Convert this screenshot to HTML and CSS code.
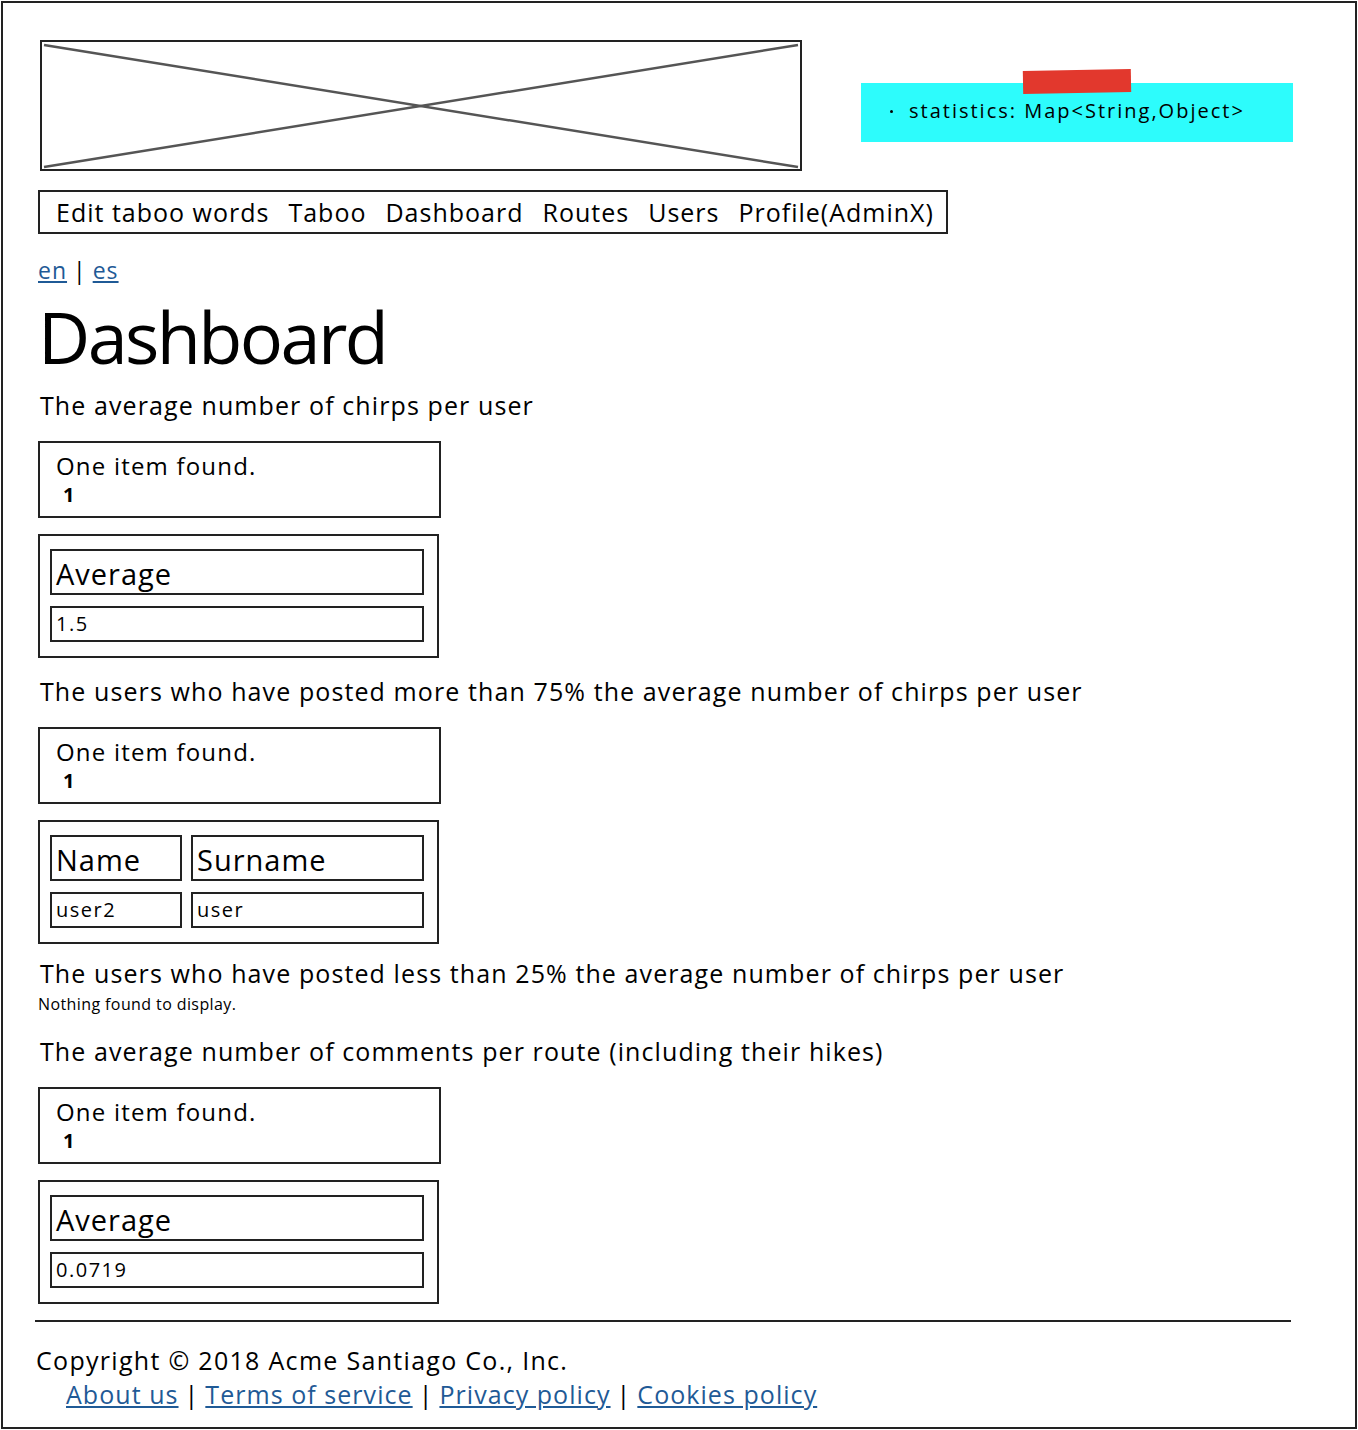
FILE: index.html
```html
<!DOCTYPE html>
<html>
<head>
<meta charset="utf-8">
<link rel="stylesheet" href="styles.css">
</head>
<body>
<div class="frame">
  <div class="header">
    <div class="banner">
      <svg class="banner-x" width="758" height="127" viewBox="0 0 758 127" preserveAspectRatio="none">
        <line x1="2" y1="3" x2="756" y2="125" stroke="#555" stroke-width="2.5"/>
        <line x1="2" y1="125" x2="756" y2="3" stroke="#555" stroke-width="2.5"/>
      </svg>
    </div>
    <div class="note">
      <span class="tape"></span>
      <div class="note-item">statistics: Map&lt;String,Object&gt;</div>
    </div>
  </div>
  <nav class="menu">
    <span>Edit taboo words</span><span>Taboo</span><span>Dashboard</span><span>Routes</span><span>Users</span><span>Profile(AdminX)</span>
  </nav>
  <div class="lang"><a href="#">en</a><span class="sep">|</span><a href="#">es</a></div>
  <h1 class="title">Dashboard</h1>

  <p class="caption c1">The average number of chirps per user</p>
  <div class="found"><div>One item found.</div><div class="count">1</div></div>
  <div class="table">
    <div class="row"><div class="th wide">Average</div></div>
    <div class="row"><div class="td wide">1.5</div></div>
  </div>

  <p class="caption c2">The users who have posted more than 75% the average number of chirps per user</p>
  <div class="found"><div>One item found.</div><div class="count">1</div></div>
  <div class="table">
    <div class="row"><div class="th name">Name</div><div class="th surname">Surname</div></div>
    <div class="row"><div class="td name">user2</div><div class="td surname">user</div></div>
  </div>

  <p class="caption c3">The users who have posted less than 25% the average number of chirps per user</p>
  <p class="nothing">Nothing found to display.</p>

  <p class="caption c4">The average number of comments per route (including their hikes)</p>
  <div class="found"><div>One item found.</div><div class="count">1</div></div>
  <div class="table">
    <div class="row"><div class="th wide">Average</div></div>
    <div class="row"><div class="td wide">0.0719</div></div>
  </div>

  <hr class="rule">
  <div class="copyright">Copyright © 2018 Acme Santiago Co., Inc.</div>
  <div class="links"><a href="#">About us</a><span class="sep">|</span><a href="#">Terms of service</a><span class="sep">|</span><a href="#">Privacy policy</a><span class="sep">|</span><a href="#">Cookies policy</a></div>
</div>
</body>
</html>
```
FILE: styles.css
```css
html, body { margin: 0; padding: 0; background: #fff; }
body { font-family: "Open Sans", "Noto Sans", sans-serif; color: #000; }
.frame {
  margin: 1px 0 0 1px;
  width: 1317px;
  height: 1424px;
  border: 2px solid #222;
  padding: 0 0 0 35px;
  overflow: hidden;
}
.header { display: flex; align-items: flex-start; margin-top: 37px; }
.banner {
  margin-left: 2px;
  width: 758px; height: 127px;
  border: 2px solid #222;
}
.banner-x { display: block; }
.note {
  position: relative;
  margin-left: 59px; margin-top: 43px;
  width: 432px; height: 59px;
  background: #2dfcfc;
}
.tape {
  position: absolute; left: 162px; top: -13px;
  width: 108px; height: 23px;
  background: #e2382d;
  transform: rotate(-1deg);
}
.note-item {
  display: flex; align-items: center; gap: 16px;
  padding-left: 29px;
  font-size: 20px; line-height: 56px; letter-spacing: 2px;
}
.note-item::before {
  content: ""; width: 3px; height: 3px; border-radius: 50%; background: #000;
}
.menu {
  display: flex; gap: 19px;
  margin-top: 19px;
  width: 890px; height: 40px;
  border: 2px solid #222;
  padding-left: 16px;
  align-items: center;
  font-size: 25px; letter-spacing: 1px;
}
.lang { margin-top: 21px; font-size: 23px; line-height: 30px; letter-spacing: 1px; }
.sep { display: inline-block; margin: 0 6px; color: #000; }
a { color: #1f5a96; }
.title { margin: 11px 0 0 0; font-size: 72px; font-weight: 400; line-height: 80px; letter-spacing: -2.6px; }
.caption { margin: 0 0 0 2px; font-size: 25px; line-height: 32px; letter-spacing: 1.1px; }
.c1 { margin-top: 13px; }
.c2 { margin-top: 17px; }
.c3 { margin-top: 13px; }
.c4 { margin-top: 21px; }
.found {
  margin-top: 20px;
  width: 383px; height: 65px;
  border: 2px solid #222;
  padding: 8px 0 0 16px;
  font-size: 24px; line-height: 30px; letter-spacing: 1.2px;
}
.count { font-size: 20px; font-weight: 700; padding-left: 7px; line-height: 28px; }
.table {
  margin-top: 16px;
  width: 401px; height: 124px;
  border: 2px solid #222;
  padding: 13px 0 0 10px;
  box-sizing: border-box;
}
.row { display: flex; gap: 9px; margin-bottom: 11px; }
.th, .td { border: 2px solid #222; box-sizing: border-box; padding-left: 4px; white-space: nowrap; }
.th { height: 46px; font-size: 29px; line-height: 46px; letter-spacing: 1px; }
.td { height: 36px; font-size: 20px; line-height: 32px; letter-spacing: 1.5px; }
.wide { width: 374px; }
.name { width: 132px; }
.surname { width: 233px; }
.nothing { margin: 5px 0 0 0; font-size: 16px; line-height: 20px; letter-spacing: 0.4px; }
.rule { margin: 16px 0 0 -3px; width: 1256px; border: 0; border-top: 2px solid #222; }
.copyright { margin-top: 22px; margin-left: -2px; font-size: 25px; line-height: 32px; letter-spacing: 1.3px; }
.links { margin-top: 2px; margin-left: 28px; font-size: 25px; line-height: 32px; letter-spacing: 1.05px; }
.links .sep { margin: 0 6px; }
```
